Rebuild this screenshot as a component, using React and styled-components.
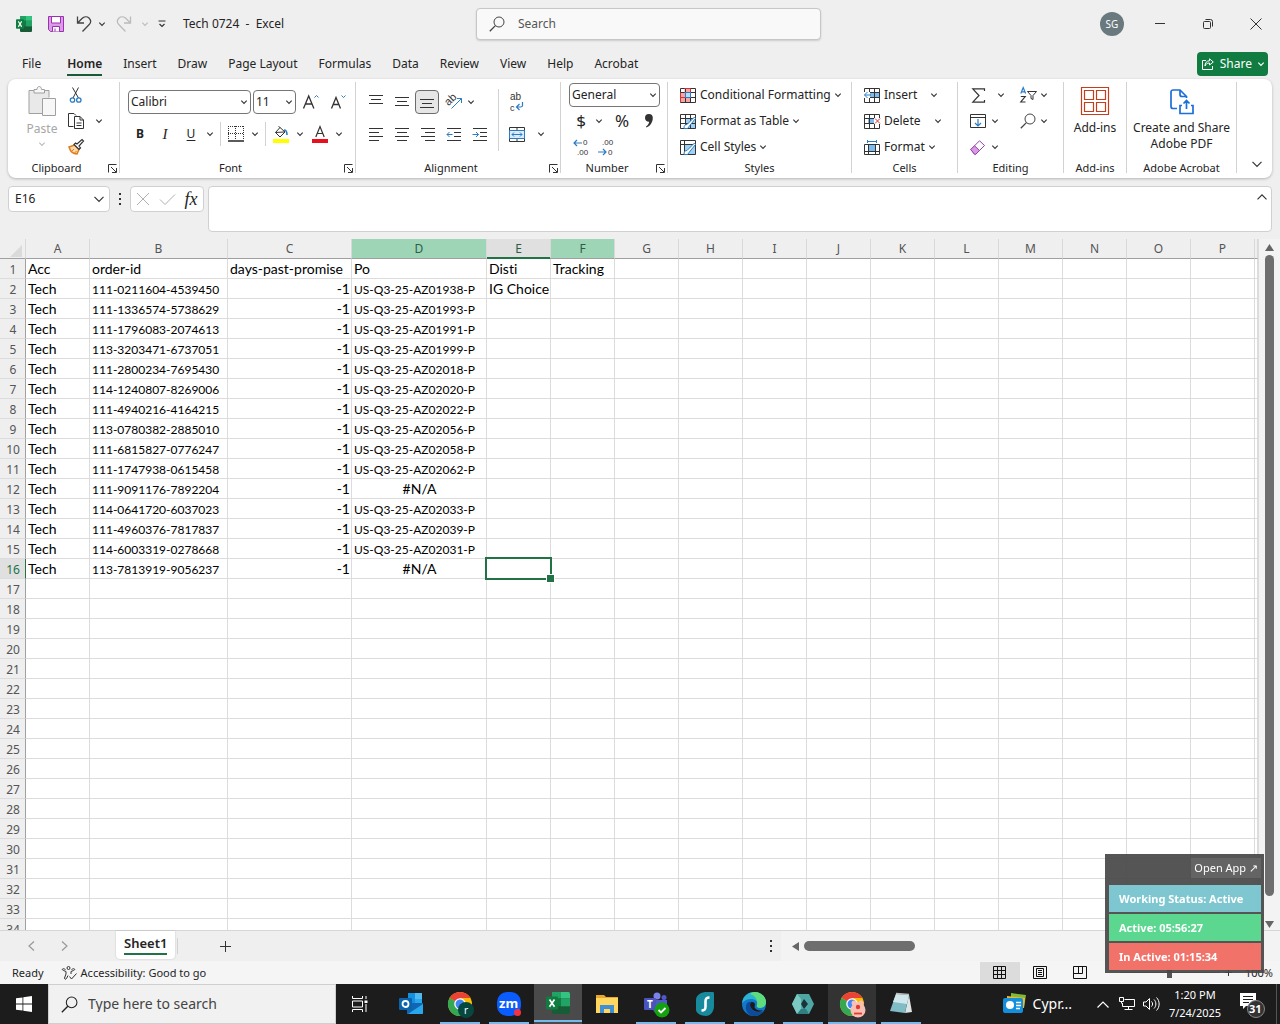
import React from 'react';
import styled, { createGlobalStyle, css } from 'styled-components';

const GlobalStyle = createGlobalStyle`
    * { box-sizing: border-box; }
    body {
        margin: 0;
        background: #efefef;
        color: #242424;
        font-family: 'Noto Sans', 'Open Sans', sans-serif;
        font-size: 12px;
        line-height: 16px;
    }
    button, input, select, textarea {
        font: inherit;
        color: inherit;
        margin: 0;
        padding: 0;
        border: 0;
        background: none;
        outline: none;
    }
    button { cursor: pointer; }
`;

const Page = styled.div`
    display: flex;
    flex-direction: column;
    height: 100vh;
    overflow: hidden;
`;

const Svg = styled.svg`
    display: block;
    flex: none;
    fill: ${props => props.$fill || 'none'};
    stroke: ${props => props.$stroke || '#333'};
    stroke-width: 1;
    overflow: visible;
`;

const IconButton = styled.button`
    display: flex;
    align-items: center;
    justify-content: center;
    flex: none;
    width: ${props => props.$w || 26}px;
    height: ${props => props.$h || 26}px;
    ${props => props.$pressed && css`
        background: #e6e6e6;
        border: 1px solid #6b6b6b;
        border-radius: 4px;
    `}
`;

/* ---------- title bar ---------- */

const TitleBar = styled.header`
    display: grid;
    grid-template-columns: 476fr 345fr 459fr;
    align-items: center;
    height: 48px;
    flex: none;
`;

const QuickAccess = styled.div`
    display: flex;
    align-items: center;
    padding-left: 8px;
`;

const DocTitle = styled.h1`
    margin: 0 0 0 9px;
    font-size: 12px;
    font-weight: 400;
    line-height: 18px;
    white-space: pre;
`;

const SearchBox = styled.label`
    display: flex;
    align-items: center;
    gap: 13px;
    height: 32px;
    padding: 0 12px;
    background: #f9f9f9;
    border: 1px solid #c6c6c6;
    border-radius: 4px;
    box-shadow: 0 1px 2px rgba(0, 0, 0, 0.15);
    input { flex: 1; min-width: 0; line-height: 18px; }
    input::placeholder { color: #555; opacity: 1; }
`;

const WindowControls = styled.div`
    display: flex;
    align-items: center;
    justify-content: flex-end;
`;

const Avatar = styled.button`
    width: 24px;
    height: 24px;
    margin-right: 12px;
    border-radius: 50%;
    background: #69797e;
    color: #fff;
    font-size: 10px;
`;

/* ---------- ribbon tabs ---------- */

const TabBar = styled.nav`
    display: flex;
    align-items: center;
    height: 31px;
    flex: none;
    padding: 0 12px;
`;

const Tab = styled.button`
    height: 24px;
    padding: 0 11px 0 10px;
    white-space: nowrap;
    font-weight: ${props => (props.$active ? 600 : 400)};
    &:first-child { margin-right: 5px; }
    span {
        display: block;
        height: 24px;
        line-height: 24px;
        border-bottom: 2px solid ${props => (props.$active ? '#185c37' : 'transparent')};
    }
`;

const ShareButton = styled.button`
    display: flex;
    align-items: center;
    gap: 6px;
    height: 24px;
    margin-left: auto;
    padding: 0 4px 0 5px;
    border-radius: 4px;
    background: #107c41;
    color: #fff;
`;

/* ---------- ribbon ---------- */

const Ribbon = styled.section`
    display: flex;
    flex: none;
    height: 99px;
    margin: 0 8px;
    background: #fff;
    border-radius: 8px;
    box-shadow: 0 1px 3px rgba(0, 0, 0, 0.25);
`;

const Group = styled.div`
    display: flex;
    flex-direction: column;
    flex: none;
    width: ${props => props.$w}px;
    height: 91px;
    margin-top: 3px;
    border-right: 1px solid #d2d2d2;
`;

const GroupBody = styled.div`
    display: flex;
    flex-direction: column;
    flex: 1;
    gap: ${props => props.$gap || 0}px;
    padding: ${props => props.$pad || '0'};
`;

const GroupLabel = styled.div`
    display: grid;
    grid-template-columns: ${props => (props.$launcher ? '1fr 14px' : '1fr')};
    align-items: center;
    justify-items: center;
    height: 14px;
    margin-bottom: -2px;
    font-size: 11px;
    line-height: 14px;
    white-space: nowrap;
`;

const Row = styled.div`
    display: flex;
    align-items: center;
    height: 26px;
    gap: ${props => props.$gap || 0}px;
`;

const Stack = styled.div`
    display: flex;
    flex-direction: column;
    gap: ${props => props.$gap || 0}px;
`;

const Columns = styled.div`
    display: flex;
    gap: ${props => props.$gap || 0}px;
`;

const Divider = styled.div`
    width: 1px;
    height: ${props => props.$h || 24}px;
    margin: ${props => props.$m || '0 2px 0 4px'};
    background: ${props => props.$color || '#d2d2d2'};
`;

const SelectBox = styled.span`
    display: grid;
    align-items: center;
    width: ${props => props.$w}px;
    height: 24px;
    border: 1px solid #767676;
    border-radius: 4px;
    background: #fff;
    select, svg { grid-area: 1 / 1; }
    select {
        appearance: none;
        width: 100%;
        padding-left: 2px;
        line-height: 20px;
    }
    svg { justify-self: end; margin-right: 3px; pointer-events: none; }
`;

const PasteButton = styled.button`
    display: flex;
    flex-direction: column;
    align-items: center;
    gap: 4px;
    width: 42px;
    margin-top: 4px;
    color: #a6a6a6;
`;

const CommandButton = styled.button`
    display: flex;
    align-items: center;
    gap: 4px;
    height: 26px;
    white-space: nowrap;
    text-align: left;
    span { width: ${props => (props.$w ? props.$w + 'px' : 'auto')}; }
`;

const LargeButton = styled.button`
    display: flex;
    flex-direction: column;
    align-items: center;
    gap: 5px;
    padding-top: ${props => props.$top}px;
    white-space: nowrap;
`;

const Glyph = styled.span`
    font-size: ${props => props.$size || 13}px;
    font-weight: ${props => (props.$bold ? 700 : 400)};
    font-family: ${props => (props.$serif ? "'Liberation Serif', serif" : 'inherit')};
    font-style: ${props => (props.$italic ? 'italic' : 'normal')};
    text-decoration: ${props => (props.$underline ? 'underline' : 'none')};
    text-underline-offset: 2px;
`;

const RibbonEnd = styled.div`
    display: flex;
    flex: 1;
    align-items: flex-end;
    justify-content: flex-end;
    padding: 0 2px 1px 0;
`;

/* ---------- formula bar ---------- */

const FormulaBar = styled.div`
    display: flex;
    align-items: flex-start;
    flex: none;
    padding: 8px 8px 7px;
`;

const FieldBox = styled.div`
    display: flex;
    align-items: center;
    width: ${props => props.$w}px;
    height: 26px;
    background: #fff;
    border: 1px solid #d0d0d0;
    border-radius: 4px;
    input { flex: 1; min-width: 0; padding-left: 6px; line-height: 18px; }
`;

const FormulaField = styled.div`
    display: flex;
    flex: 1;
    height: 46px;
    margin-left: 4px;
    background: #fff;
    border: 1px solid #d0d0d0;
    border-radius: 4px;
    textarea { flex: 1; resize: none; padding: 4px 6px; }
`;

/* ---------- worksheet ---------- */

const SheetArea = styled.main`
    display: flex;
    flex: 1;
    min-height: 0;
    overflow: hidden;
`;

const GridView = styled.div`
    flex: 1;
    min-width: 0;
    overflow: hidden;
`;

const Grid = styled.table`
    width: 100%;
    table-layout: fixed;
    border-collapse: separate;
    border-spacing: 0;
    background: #fff;
`;

const ColHead = styled.th`
    height: 20px;
    padding: 0;
    font-weight: 400;
    color: ${props => (props.$state ? '#2b5f45' : '#555')};
    background: ${props => ({ marked: '#9fd5b7', active: '#e0e0e0' }[props.$state] || '#efefef')};
    border-right: 1px solid #d9d9d9;
    border-bottom: 1px solid ${props => (props.$state === 'active' ? '#217346' : '#a0a0a0')};
    box-shadow: ${props => (props.$state === 'active' ? 'inset 0 -1px #217346' : 'none')};
    svg { margin: 4px 0 0 10px; }
`;

const RowHead = styled.th`
    height: 20px;
    padding: 2px 0 0 1px;
    font-weight: 400;
    line-height: 17px;
    color: ${props => (props.$active ? '#217346' : '#555')};
    background: ${props => (props.$active ? '#e0e0e0' : '#efefef')};
    border-right: 1px solid ${props => (props.$active ? '#217346' : '#a0a0a0')};
    border-bottom: 1px solid #dcdcdc;
`;

const Cell = styled.td`
    position: relative;
    height: 20px;
    padding: ${props => (props.$long ? 2 : 1)}px 1px 0 2px;
    font-family: Lato, sans-serif;
    font-size: ${props => (props.$long ? 12 : 14)}px;
    font-variant-ligatures: none;
    line-height: 17px;
    color: #000;
    white-space: nowrap;
    text-align: ${props => props.$align || 'left'};
    vertical-align: top;
    border-right: 1px solid #dcdcdc;
    border-bottom: 1px solid #dcdcdc;
`;

const Selection = styled.div`
    position: absolute;
    inset: -2px;
    border: 2px solid #217346;
    z-index: 1;
    &::after {
        content: '';
        position: absolute;
        right: -5px;
        bottom: -5px;
        width: 7px;
        height: 7px;
        background: #217346;
        border: 1px solid #fff;
    }
`;

const VScroll = styled.div`
    display: flex;
    flex-direction: column;
    align-items: center;
    width: 22px;
    padding: 4px 0 1px;
    background: #f3f3f3;
    border-left: 1px solid #dcdcdc;
`;

const Thumb = styled.div`
    background: #6e6e6e;
    border-radius: 5px;
    ${props => (props.$vertical
        ? css`width: 9px; flex: 640 1 0;`
        : css`height: 10px; flex: 111 1 0;`)}
`;

const Space = styled.div`
    flex: ${props => props.$grow || 1} 1 0;
`;

const SheetTabs = styled.div`
    display: flex;
    align-items: center;
    height: 31px;
    flex: none;
    border-top: 1px solid #d6d6d6;
`;

const SheetNav = styled.div`
    display: flex;
    width: 116px;
    padding-left: 15px;
`;

const SheetTab = styled.button`
    display: flex;
    align-self: flex-start;
    align-items: flex-start;
    height: 28px;
    padding: 0 8px;
    background: #fff;
    border-radius: 0 0 4px 4px;
    box-shadow: 0 0 2px rgba(0, 0, 0, 0.2);
    font-size: 13px;
    font-weight: 600;
    span {
        height: 24px;
        line-height: 24px;
        border-bottom: 2px solid #217346;
    }
`;

const HScroll = styled.div`
    display: flex;
    align-items: center;
    width: 39%;
    height: 30px;
    gap: 4px;
    padding: 0 23px 0 10px;
    background: #f3f3f3;
`;

const StatusBar = styled.footer`
    display: flex;
    align-items: center;
    height: 23px;
    flex: none;
    padding: 0 7px 0 12px;
    background: #f5f5f5;
    font-size: 11px;
`;

const StatusButton = styled.button`
    display: flex;
    align-items: center;
    gap: 4px;
    margin-left: ${props => props.$left}px;
`;

const ViewButton = styled.button`
    display: flex;
    align-items: center;
    justify-content: center;
    width: 40px;
    height: 22px;
    background: ${props => (props.$active ? '#dcdcdc' : 'none')};
`;

const ZoomTrack = styled.div`
    display: flex;
    justify-content: center;
    align-items: center;
    width: 100px;
    height: 1px;
    margin: 0 4px 0 20px;
    background: #777;
    i { width: 5px; height: 11px; background: #555; }
`;

/* ---------- tracker widget ---------- */

const Tracker = styled.aside`
    position: fixed;
    right: 16px;
    bottom: 51px;
    z-index: 2;
    display: flex;
    flex-direction: column;
    gap: 2px;
    width: 159px;
    padding: 4px 3px 3px 4px;
    background: rgba(70, 70, 70, 0.92);
`;

const OpenApp = styled.button`
    align-self: flex-end;
    height: 20px;
    margin-bottom: 5px;
    padding: 0 3px;
    background: #646464;
    color: #fff;
    font-size: 11px;
    white-space: nowrap;
`;

const TrackerLine = styled.div`
    height: 27px;
    padding-left: 10px;
    background: ${props => props.$color};
    color: #fff;
    font-size: 11px;
    font-weight: 700;
    line-height: 27px;
    white-space: nowrap;
`;

/* ---------- taskbar ---------- */

const Taskbar = styled.footer`
    display: flex;
    height: 40px;
    flex: none;
    background: #1c1c1c;
    color: #fff;
`;

const TaskSearch = styled.label`
    display: flex;
    align-items: center;
    gap: 10px;
    width: 288px;
    padding: 0 12px;
    background: #f1f1f1;
    border: 1px solid #cfcfcf;
    color: #333;
    font-size: 14px;
    input { flex: 1; min-width: 0; }
    input::placeholder { color: #444; opacity: 1; }
`;

const Apps = styled.div`
    display: flex;
    gap: 1px;
    margin-left: 3px;
`;

const AppButton = styled.button`
    display: flex;
    flex-direction: column;
    align-items: center;
    width: 48px;
    height: 40px;
    padding-top: 8px;
    background: ${props => props.$bg || 'none'};
    &::after {
        content: '';
        width: ${props => (props.$bg ? 48 : 40)}px;
        height: 2px;
        margin-top: 6px;
        background: ${props => (props.$running ? '#76b9ed' : 'transparent')};
    }
`;

const Tray = styled.div`
    display: flex;
    align-items: center;
    margin-left: auto;
    padding-right: 3px;
`;

const Weather = styled.button`
    display: flex;
    align-items: center;
    gap: 7px;
    margin-right: 19px;
    font-size: 14px;
`;

const Clock = styled.time`
    width: 64px;
    text-align: center;
    font-size: 11px;
    line-height: 18px;
`;

/* ---------- icons ---------- */

const BLUE = '#2b7cc4';

const IconText = styled.text`
    fill: #333;
    stroke: none;
    font-family: 'Liberation Sans', sans-serif;
    font-size: ${props => props.$size}px;
`;

const Chevron = ({ size = 6, color, up }) => (
    <Svg width={size} height={size} viewBox="0 0 6 6" $stroke={color}>
        <path d={up ? 'M0.3 4.4 3 1.7 5.7 4.4' : 'M0.3 1.7 3 4.4 5.7 1.7'} strokeWidth={size > 8 ? 0.7 : 1.1} />
    </Svg>
);

const DropButton = ({ w = 12, color, label }) => (
    <IconButton $w={w} aria-label={label}><Chevron color={color} /></IconButton>
);

const Magnifier = ({ size = 16, color = '#444' }) => (
    <Svg width={size} height={size} viewBox="0 0 16 16" $stroke={color}>
        <circle cx="10" cy="6" r="5" />
        <path d="M6.4 9.6 0.8 15.2" strokeWidth="1.3" />
    </Svg>
);

const ExcelLogo = ({ w = 16, h = 16 }) => (
    <Svg width={w} height={h} viewBox="0 0 24 20" preserveAspectRatio="none" $stroke="none">
        <rect x="6" y="0" width="18" height="20" rx="1.5" fill="#185c37" />
        <path d="M6 0h9v6H6z" fill="#21a366" />
        <path d="M15 0h7.5A1.5 1.5 0 0 1 24 1.5V6h-9z" fill="#33c481" />
        <path d="M6 6h9v7H6z" fill="#107c41" />
        <path d="M15 6h9v7h-9z" fill="#21a366" />
        <rect x="0" y="4" width="12" height="12" rx="1.2" fill="#107c41" />
        <path d="M3.5 6.8 8.5 13.4M8.5 6.8 3.5 13.4" stroke="#fff" strokeWidth="1.7" />
    </Svg>
);

const SaveIcon = () => (
    <Svg width="16" height="16" viewBox="0 0 16 16" $stroke="#9b30b0">
        <path d="M0.5 0.5h15v15h-13l-2-2z" fill="#dc9be6" />
        <path d="M3.5 0.5h9v6.5h-9z" fill="#fff" />
        <path d="M4.5 15.5v-5h7v5" fill="#fff" />
        <path d="M7 12.5v3" />
    </Svg>
);

const UndoIcon = ({ flip, color }) => (
    <Svg width="16" height="16" viewBox="0 0 16 16" $stroke={color}>
        <g transform={flip ? 'matrix(-1 0 0 1 16 0)' : undefined}>
            <path d="M1.5 0.5v6.5h6.5M1.8 6.7 6 2.5C8 0.5 11 0.3 13 2c2 2 2 4.8 0 6.8L6.5 15.5" strokeWidth="1.3" />
        </g>
    </Svg>
);

const Launcher = () => (
    <Svg width="9" height="9" viewBox="0 0 9 9">
        <path d="M0.5 8.5v-8h8M3 3l5 5M8.5 4v4.5H4" />
    </Svg>
);

const PasteIcon = () => (
    <Svg width="28" height="31" viewBox="0 0 28 31" $stroke="#a0a0a0">
        <path d="M1 4.5h20v23H1z" fill="#e9e9e9" stroke="none" />
        <path d="M14 27.5H1v-23h5M16 4.5h5v7" />
        <path d="M6 7V3.5h3c0-4 4.5-4 4.5 0h3V7z" fill="#f7f7f7" />
        <path d="M14.5 12.5h13v17h-13z" fill="#f7f7f7" />
    </Svg>
);

const ScissorsIcon = () => (
    <Svg width="14" height="16" viewBox="0 0 14 16">
        <path d="M3.5 0.5 9.5 11M9.5 0.5 4 11" />
        <circle cx="3.5" cy="13" r="2.2" stroke={BLUE} strokeWidth="1.3" />
        <circle cx="9.8" cy="13" r="2.2" stroke={BLUE} strokeWidth="1.3" />
    </Svg>
);

const CopyIcon = () => (
    <Svg width="16" height="16" viewBox="0 0 16 16">
        <path d="M5.5 13.5H0.5v-13h5.5l2 2" />
        <path d="M6.5 3.5h5.5l3.5 3.5v8.5h-9zM12 3.5V7h3.5M8.5 10h5M8.5 12.5h5" fill="#fff" />
    </Svg>
);

const BrushIcon = () => (
    <Svg width="16" height="16" viewBox="0 0 16 16">
        <path d="M1 8 6.5 6l4.5 4.5L9 15c-3 0-6.5-2-8-7z" fill="#fbd9a8" stroke="#e07b1a" strokeWidth="1.5" />
        <path d="M4 12l2-2M6.5 14l2-2" stroke="#e07b1a" />
        <path d="M6 5.5 11 10.5l1.5-1.5-1.5-2 4.5-5-1.5-1.5L9 5 7.5 4z" fill="#fff" strokeWidth="1.2" />
    </Svg>
);

const GrowFont = ({ down }) => (
    <Svg width="16" height="16" viewBox="0 0 16 16">
        <path d={down ? 'M1.5 14.5 6 3.5l4.5 11M3.2 10.5h5.6' : 'M0.5 14.5 5.7 2l5.2 12.5M2.4 10h6.6'} strokeWidth="1.3" />
        <path d={down ? 'M11.5 1.5l2 2 2-2' : 'M11.5 3.5l2-2 2 2'} stroke={BLUE} />
    </Svg>
);

const BorderIcon = () => (
    <Svg width="16" height="16" viewBox="0 0 16 16">
        <path d="M0.5 0v14M15.5 0v14M7.5 0v14M0 0.5h16M0 7.5h16" strokeDasharray="1 1" />
        <path d="M0 15h16" strokeWidth="1.6" />
    </Svg>
);

const FillIcon = () => (
    <Svg width="16" height="17" viewBox="0 0 16 17">
        <path d="M7 1.5 12 6 7 11 2.5 6.5 7 1.5 5.5 0.5M2.5 6.5 11 6" />
        <path d="M11 4c2 0 3 1.5 3 5" stroke={BLUE} strokeWidth="1.6" />
        <path d="M0 13h16v4H0z" fill="#ffff00" stroke="none" />
    </Svg>
);

const FontColorIcon = () => (
    <Svg width="16" height="17" viewBox="0 0 16 17">
        <path d="M3.8 11 8 0.5 12.2 11M5.2 7.5h5.6" strokeWidth="1.2" />
        <path d="M0 13h16v4H0z" fill="#e8101e" stroke="none" />
    </Svg>
);

// lines: [x1, x2] pairs, 4px apart
const LinesIcon = ({ lines, top = 2, children }) => (
    <Svg width="16" height="16" viewBox="0 0 16 16">
        {lines.map(([a, b], i) => <path key={i} d={`M${a} ${top + i * 4 + 0.5}H${b}`} />)}
        {children}
    </Svg>
);

const OrientationIcon = () => (
    <Svg width="17" height="16" viewBox="0 0 17 16">
        <IconText $size={11} x="0" y="10" transform="rotate(-45 4 8)">ab</IconText>
        <path d="M5.5 14.5 15.5 4.5M11 4.5h4.5V9" stroke={BLUE} />
    </Svg>
);

const WrapIcon = () => (
    <Svg width="14" height="17" viewBox="0 0 14 17">
        <IconText $size={10} x="0" y="6">ab</IconText>
        <IconText $size={9} x="0" y="17">c</IconText>
        <path d="M12.5 8v3.5c0 1-1 1.5-2 1.5H7M9.5 10 6.5 13l3 3" stroke={BLUE} strokeWidth="1.2" />
    </Svg>
);

const MergeIcon = () => (
    <Svg width="16" height="15" viewBox="0 0 16 15">
        <path d="M0.5 0.5h15v14H0.5zM8 0.5v3M8 11.5v3" />
        <path d="M0.5 3.5h15v8H0.5z" fill="#d9ecfb" stroke={BLUE} />
        <path d="M3 7.5h10M5 5.5l-2 2 2 2M11 5.5l2 2-2 2" stroke={BLUE} />
    </Svg>
);

const DecimalIcon = ({ less }) => (
    <Svg width="16" height="16" viewBox="0 0 16 16">
        <IconText $size={8} x={less ? 4 : 10} y="6">{less ? '.00' : '0'}</IconText>
        <IconText $size={8} x={less ? 10 : 4} y="16">{less ? '0' : '.00'}</IconText>
        <path d={less ? 'M0 13h8M5 10l3 3-3 3' : 'M9 4H1M4 1 1 4l3 3'} stroke={BLUE} strokeWidth="1.2" />
    </Svg>
);

const PenOverlay = () => (
    <path d="M4 14.5c0-3 1-4 3-4L14.5 3l1 1.5-6.5 8c0 1.5-2 2.5-5 2z" fill="#fff" stroke={BLUE} />
);

const tableGrid = 'M0.5 0.5h15v14h-15zM0.5 4.5h15M0.5 9.5h15M5.5 0.5v14M10.5 0.5v14';

const tableIcons = {
    conditional: (
        <>
            <path d="M4.5 0.5h6v4h-6zM0.5 4.5h5v10h-5zM5.5 9.5h5v5h-5z" fill="#f6a5a5" stroke="none" />
            <path d={tableGrid} />
            <path d="M4.5 0.5h6M4.5 4.5h6M0.5 9.5h10M0.5 4.5v10M10.5 0.5v4" stroke="#d13438" />
            <path d="M5.5 4.5h5v5h-5z" fill="#b9dcf7" stroke={BLUE} />
        </>
    ),
    table: (
        <>
            <path d="M5 5h10.5v9.5H5z" fill="#9fd0f5" stroke="none" />
            <path d={tableGrid} />
            <PenOverlay />
        </>
    ),
    styles: (
        <>
            <path d="M4 4h11.5v10.5H4z" fill="#9fd0f5" stroke="none" />
            <path d="M0.5 0.5h15v14h-15zM0.5 4.5h15M4.5 0.5v14" />
            <PenOverlay />
        </>
    ),
    insert: (
        <>
            <path d="M6 4.5h9.5v5H6z" fill="#7cbcf0" stroke="none" />
            <path d={tableGrid} />
            <path d="M0 4h6v6H0z" fill="#fff" stroke="none" />
            <path d="M7 7H0.5M3.5 4l-3 3 3 3" stroke={BLUE} />
        </>
    ),
    delete: (
        <>
            <path d="M4 4.5h6v5H4z" fill="#7cbcf0" stroke="none" />
            <path d={tableGrid} />
            <path d="M10 4h6v6h-6z" fill="#fff" stroke="none" />
            <path d="M11 4.5l5 5M16 4.5 11 9.5" stroke="#d13438" />
        </>
    ),
    format: (
        <>
            <path d="M4.5 5h7v6h-7z" fill="#7cbcf0" stroke="none" />
            <path d="M0.5 4.5h15v10h-15zM0.5 11.5h15M4.5 4.5v10M11.5 4.5v10" />
            <path d="M3.5 1.5h9M3.5 0v3M12.5 0v3" stroke={BLUE} />
        </>
    )
};

const SigmaIcon = () => (
    <Svg width="13" height="15" viewBox="0 0 13 15">
        <path d="M12.5 3V0.8H0.8L7 7.5 0.8 14.2h11.7V12" strokeWidth="1.2" />
    </Svg>
);

const FillDownIcon = () => (
    <Svg width="16" height="14" viewBox="0 0 16 14">
        <path d="M0.5 0.5h15v13h-15zM0.5 3.5h15" />
        <path d="M8 5v7M5 9l3 3 3-3" stroke={BLUE} strokeWidth="1.2" />
    </Svg>
);

const EraserIcon = () => (
    <Svg width="16" height="15" viewBox="0 0 16 15" $stroke="#9b3fb0">
        <path d="M0.8 9.5 9.5 0.8l5 4.7-8.7 8.7H4.5z" fill="#fff" />
        <path d="M0.8 9.5 4.5 5.8l5 4.7-3.7 3.7H4.5z" fill="#d79be3" />
    </Svg>
);

const SortIcon = () => (
    <Svg width="17" height="16" viewBox="0 0 17 16">
        <path d="M0.8 6.5 3.2 0.5l2.4 6M1.5 4.8h3.4" stroke={BLUE} strokeWidth="1.2" />
        <path d="M0.8 9.5h4.4L0.8 15h4.7" strokeWidth="1.2" />
        <path d="M7.5 4.5h9l-3.5 4v4l-2-1v-3z" />
    </Svg>
);

const AddInsIcon = () => (
    <Svg width="28" height="28" viewBox="0 0 28 28" $stroke="#c43e1c">
        <path d="M0.5 0.5h27v27h-27zM3.5 3.5h9v9h-9zM15.5 3.5h9v9h-9zM3.5 15.5h9v9h-9zM15.5 15.5h9v9h-9z" strokeWidth="1.2" />
    </Svg>
);

const PdfShareIcon = () => (
    <Svg width="24" height="26" viewBox="0 0 24 26" $stroke="#1b6fd8">
        <path d="M7 19.5H3a2 2 0 0 1-2-2V3a2 2 0 0 1 2-2h7l6.5 6.5V9M10 1v4.5a2 2 0 0 0 2 2h4.5" strokeWidth="1.7" />
        <path d="M12 16.5h-2v8h13v-8h-2M16.5 20v-8M13.5 14.5l3-3 3 3" strokeWidth="1.7" />
    </Svg>
);

const ShareIcon = () => (
    <Svg width="12" height="12" viewBox="0 0 12 12" $stroke="#fff">
        <path d="M4 2.5H0.5v9h10V8M7.5 0.8 11.3 4 7.5 7V5C5 5 3.8 6 3 8c0-3 1.5-5.2 4.5-5.2z" />
    </Svg>
);

const Arrow = ({ dir }) => (
    <Svg width="9" height="9" viewBox="0 0 9 9" $stroke="none" $fill="#666">
        <path d={{ up: 'M0 8 4.5 1 9 8z', down: 'M0 1h9L4.5 8z', left: 'M8 0v9L1 4.5z', right: 'M1 0v9l7-4.5z' }[dir]} />
    </Svg>
);

const Dots = () => (
    <Svg width="2" height="12" $stroke="none" $fill="#333">
        <path d="M0 0h2v2H0zM0 5h2v2H0zM0 10h2v2H0z" />
    </Svg>
);

const AppSvg = ({ children }) => (
    <Svg width="24" height="24" viewBox="0 0 24 24" $stroke="none">{children}</Svg>
);

const ChromeBase = () => (
    <g>
        <circle cx="12" cy="12" r="12" fill="#fbbc04" />
        <path d="M12 12 1.6 6A12 12 0 0 1 22.4 6H12z" fill="#ea4335" />
        <path d="M1.6 6A12 12 0 0 0 12 24l5-9-5-3z" fill="#34a853" />
        <circle cx="12" cy="12" r="5.8" fill="#fff" />
        <circle cx="12" cy="12" r="4.5" fill="#4285f4" />
    </g>
);

const appIcons = {
    Outlook: (
        <AppSvg>
            <path d="M9 1h14v11H9z" fill="#1490df" />
            <path d="M16 1h7v6h-7z" fill="#50b9f0" />
            <path d="M16 7h7v6h-7z" fill="#28a8ea" />
            <path d="M8 11h16v10a1 1 0 0 1-1 1H8z" fill="#1066b5" />
            <path d="M24 12v9a1 1 0 0 1-1 1H9z" fill="#28a8ea" />
            <rect x="0" y="6" width="13" height="12" rx="1" fill="#0a64ad" />
            <circle cx="6.5" cy="12" r="3" stroke="#fff" strokeWidth="1.8" />
        </AppSvg>
    ),
    Chrome: (
        <AppSvg>
            <ChromeBase />
            <circle cx="18" cy="18" r="8" fill="#06483f" />
            <text x="16" y="22" fontSize="10" fill="#fff">r</text>
        </AppSvg>
    ),
    Zoom: (
        <AppSvg>
            <rect width="24" height="24" rx="10" fill="#0b5cff" />
            <text x="2" y="16" fontSize="13" fontWeight="700" fill="#fff">zm</text>
            <circle cx="20.5" cy="20.5" r="3.5" fill="#f5333f" />
        </AppSvg>
    ),
    Excel: <ExcelLogo w={24} h={22} />,
    'File Explorer': (
        <AppSvg>
            <path d="M1 3h8l2 2h12v16H1z" fill="#e8a72c" />
            <path d="M1 6h22v15H1z" fill="#ffd75e" />
            <path d="M5 21v-8h14v8h-4v-4H9v4z" fill="#3f8fd8" />
        </AppSvg>
    ),
    Teams: (
        <AppSvg>
            <circle cx="13" cy="4" r="3.5" fill="#7b83eb" />
            <circle cx="20" cy="5.5" r="2.5" fill="#5059c9" />
            <path d="M8 8h15v7c0 4-4 7-8 7s-6-3-6-6z" fill="#5059c9" />
            <rect x="0" y="6" width="12" height="12" rx="1" fill="#4b53bc" />
            <text x="3" y="16" fontSize="10" fontWeight="700" fill="#fff">T</text>
            <circle cx="18" cy="18" r="7.5" fill="#13a10e" />
            <path d="m14.5 18 2.5 2.5 4.5-4.5" stroke="#fff" strokeWidth="1.8" />
        </AppSvg>
    ),
    Surfshark: (
        <AppSvg>
            <path d="M3 8c0-4 3-7 9-8h8c1 0 1 1 1 3v11c0 6-4 10-8 10-5 0-10-3-10-6z" fill="#178a9e" />
            <path d="M16.5 5.5c-3 0-4 1-4 4v5c0 3-1 4-4 4" stroke="#fff" strokeWidth="2.6" />
        </AppSvg>
    ),
    Edge: (
        <AppSvg>
            <circle cx="12" cy="12" r="12" fill="#1478c8" />
            <path d="M0 11C1 4 6 0 12 0c7 0 12 5 12 10 0 4-3 6-6 6-2 0-4-1-3-3 1-4-2-6-6-6-4 0-7 2-9 4z" fill="#2bb3d2" />
            <path d="M13 0c6 0 11 5 11 10 0 4-3 6-6 6-2 0-4-1-3-3 1-5-1-9-7-11 2-1.5 3-2 5-2z" fill="#5fdc7c" />
            <path d="M8 12c0 6 5 10 13 7-2 4-5 5-9 5-6 0-9-6-8-10 0-3 3-5 6-4-2 0-2 1-2 2z" fill="#0c4a9b" />
            <path d="M10 10c2 0 3 1 3 3 0 1-1 2 0 3 1 2 5 3 8 2-5 4-12 1-13-5 0-2 1-3 2-3z" fill="#1c1c1c" />
        </AppSvg>
    ),
    Hexnode: (
        <AppSvg>
            <path d="M6 2h12l5 10-5 10H6L1 12z" fill="#4fa7a5" />
            <path d="M6 2 1 12l5 10 4-5V7z" fill="#7cc9c4" />
            <path d="M18 22H6l4-5h5z" fill="#2f7f82" />
            <path d="m13 7 4 5-4 5-3-5z" fill="#1b3338" />
        </AppSvg>
    ),
    'Chrome work profile': (
        <AppSvg>
            <ChromeBase />
            <circle cx="18" cy="18" r="7.5" fill="#f8c0b4" />
            <circle cx="14" cy="11" r="2.5" fill="#f8c0b4" />
            <circle cx="21" cy="11" r="2.5" fill="#f8c0b4" />
            <circle cx="18" cy="15" r="2.2" fill="#e23b2e" />
            <path d="M14 21.5h8" stroke="#e23b2e" strokeWidth="1.8" />
        </AppSvg>
    ),
    Notepad: (
        <AppSvg>
            <path d="m20 3 3 17-7 1z" fill="#dfe4e4" />
            <path d="M7 2 20 3l-4 18L1 19z" fill="#7fbcc6" />
            <path d="M7 2 20 3l-2 9-14-2z" fill="#cfe6ea" />
            <path d="M7 1.5 20 2.5" stroke="#bbb" strokeWidth="1.5" />
        </AppSvg>
    )
};

const apps = [
    { name: 'Outlook' },
    { name: 'Chrome', running: true },
    { name: 'Zoom', running: true },
    { name: 'Excel', running: true, bg: '#4a4a4a' },
    { name: 'File Explorer' },
    { name: 'Teams', running: true },
    { name: 'Surfshark', running: true },
    { name: 'Edge', running: true },
    { name: 'Hexnode', running: true },
    { name: 'Chrome work profile', running: true, bg: '#333' },
    { name: 'Notepad', running: true }
];

/* ---------- data ---------- */

const tabs = ['File', 'Home', 'Insert', 'Draw', 'Page Layout', 'Formulas', 'Data', 'Review', 'View', 'Help', 'Acrobat'];

const columns = [
    ['A', 64], ['B', 138], ['C', 124], ['D', 135], ['E', 64], ['F', 64], ['G', 64], ['H', 64],
    ['I', 64], ['J', 64], ['K', 64], ['L', 64], ['M', 64], ['N', 64], ['O', 64], ['P', 64]
];

const headState = { D: 'marked', E: 'active', F: 'marked' };

const orders = [
    ['111-0211604-4539450', 'US-Q3-25-AZ01938-P', 'IG Choice'],
    ['111-1336574-5738629', 'US-Q3-25-AZ01993-P'],
    ['111-1796083-2074613', 'US-Q3-25-AZ01991-P'],
    ['113-3203471-6737051', 'US-Q3-25-AZ01999-P'],
    ['111-2800234-7695430', 'US-Q3-25-AZ02018-P'],
    ['114-1240807-8269006', 'US-Q3-25-AZ02020-P'],
    ['111-4940216-4164215', 'US-Q3-25-AZ02022-P'],
    ['113-0780382-2885010', 'US-Q3-25-AZ02056-P'],
    ['111-6815827-0776247', 'US-Q3-25-AZ02058-P'],
    ['111-1747938-0615458', 'US-Q3-25-AZ02062-P'],
    ['111-9091176-7892204', '#N/A'],
    ['114-0641720-6037023', 'US-Q3-25-AZ02033-P'],
    ['111-4960376-7817837', 'US-Q3-25-AZ02039-P'],
    ['114-6003319-0278668', 'US-Q3-25-AZ02031-P'],
    ['113-7813919-9056237', '#N/A']
];

const rows = [
    ['Acc', 'order-id', 'days-past-promise', 'Po', 'Disti', 'Tracking'],
    ...orders.map(([id, po, disti]) => ['Tech', id, '-1', po, disti || ''])
];

const alignOf = value => {
    if (value === '-1') return 'right';
    if (value === '#N/A') return 'center';
    return 'left';
};

/* ---------- sections ---------- */

const RibbonGroup = ({ w, label, launcher, pad, gap, children }) => (
    <Group $w={w}>
        <GroupBody $pad={pad} $gap={gap}>{children}</GroupBody>
        <GroupLabel $launcher={launcher}>
            <span>{label}</span>
            {launcher && <button aria-label={`${label} settings`}><Launcher /></button>}
        </GroupLabel>
    </Group>
);

const Dropdown = ({ w, label, value }) => (
    <SelectBox $w={w}>
        <select aria-label={label} defaultValue={value}>
            <option>{value}</option>
        </select>
        <Chevron />
    </SelectBox>
);

const Command = ({ kind, w, children }) => (
    <CommandButton $w={w}>
        <Svg width="16" height="15" viewBox="0 0 16 15">{tableIcons[kind]}</Svg>
        <span>{children}</span>
        <Chevron />
    </CommandButton>
);

const TitleSection = () => (
    <TitleBar>
        <QuickAccess>
            <IconButton $w={32} aria-label="Excel"><ExcelLogo /></IconButton>
            <IconButton $w={32} aria-label="Save"><SaveIcon /></IconButton>
            <IconButton $w={24} aria-label="Undo"><UndoIcon color="#444" /></IconButton>
            <DropButton label="Undo history" />
            <IconButton $w={32} aria-label="Redo"><UndoIcon color="#bbb" flip /></IconButton>
            <DropButton label="Redo history" color="#bbb" w={10} />
            <IconButton $w={24} aria-label="Customize toolbar">
                <Svg width="8" height="8" viewBox="0 0 8 8"><path d="M0.5 1h7M1.5 4l2.5 2.5L6.5 4" strokeWidth="1.2" /></Svg>
            </IconButton>
            <DocTitle>Tech 0724  -  Excel</DocTitle>
        </QuickAccess>
        <SearchBox>
            <Magnifier />
            <input type="search" placeholder="Search" aria-label="Search" />
        </SearchBox>
        <WindowControls>
            <Avatar>SG</Avatar>
            <IconButton $w={48} aria-label="Minimize">
                <Svg width="10" height="10"><path d="M0 4.5h10" /></Svg>
            </IconButton>
            <IconButton $w={48} aria-label="Restore">
                <Svg width="10" height="10" viewBox="0 0 10 10">
                    <rect x="0.5" y="2.5" width="7" height="7" rx="1" />
                    <path d="M2.5 0.5h5a2 2 0 0 1 2 2v5" />
                </Svg>
            </IconButton>
            <IconButton $w={48} aria-label="Close">
                <Svg width="12" height="12" viewBox="0 0 12 12"><path d="M0.5 0.5l11 11M11.5 0.5l-11 11" /></Svg>
            </IconButton>
        </WindowControls>
    </TitleBar>
);

const RibbonSection = () => (
    <Ribbon>
        <RibbonGroup w={112} label="Clipboard" launcher pad="0 0 0 13px">
            <Columns>
                <PasteButton>
                    <PasteIcon />
                    <span>Paste</span>
                    <Chevron color="#bbb" />
                </PasteButton>
                <Stack>
                    <Row><IconButton aria-label="Cut"><ScissorsIcon /></IconButton></Row>
                    <Row>
                        <IconButton aria-label="Copy"><CopyIcon /></IconButton>
                        <DropButton label="Copy options" w={20} />
                    </Row>
                    <Row><IconButton aria-label="Format Painter"><BrushIcon /></IconButton></Row>
                </Stack>
            </Columns>
        </RibbonGroup>
        <RibbonGroup w={236} label="Font" launcher pad="7px 0 0 8px" gap={6}>
            <Row $gap={2}>
                <Dropdown w={123} label="Font" value="Calibri" />
                <Dropdown w={43} label="Font size" value="11" />
                <IconButton aria-label="Increase font size"><GrowFont /></IconButton>
                <IconButton $w={24} aria-label="Decrease font size"><GrowFont down /></IconButton>
            </Row>
            <Row>
                <IconButton $w={24} aria-label="Bold"><Glyph $bold $size={12}>B</Glyph></IconButton>
                <IconButton aria-label="Italic"><Glyph $serif $italic $size={15}>I</Glyph></IconButton>
                <IconButton aria-label="Underline"><Glyph $underline $size={12}>U</Glyph></IconButton>
                <DropButton label="Underline style" />
                <Divider />
                <IconButton aria-label="Borders"><BorderIcon /></IconButton>
                <DropButton label="Border style" />
                <Divider />
                <IconButton aria-label="Fill color"><FillIcon /></IconButton>
                <DropButton label="Fill colors" />
                <IconButton $w={28} aria-label="Font color"><FontColorIcon /></IconButton>
                <DropButton label="Font colors" w={10} />
            </Row>
        </RibbonGroup>
        <RibbonGroup w={205} label="Alignment" launcher pad="7px 0 0 7px">
            <Columns>
                <Stack $gap={6}>
                    <Row>
                        <IconButton aria-label="Top align"><LinesIcon top={1} lines={[[1, 15], [3, 13], [1, 15]]} /></IconButton>
                        <IconButton aria-label="Middle align"><LinesIcon top={3} lines={[[1, 15], [3, 13], [1, 15]]} /></IconButton>
                        <IconButton aria-label="Bottom align" $w={24} $h={24} $pressed><LinesIcon top={5} lines={[[1, 15], [3, 13], [1, 15]]} /></IconButton>
                        <IconButton $w={30} aria-label="Orientation"><OrientationIcon /></IconButton>
                        <DropButton label="Orientation options" w={4} />
                    </Row>
                    <Row>
                        <IconButton aria-label="Align left"><LinesIcon lines={[[1, 15], [1, 11], [1, 15], [1, 11]]} /></IconButton>
                        <IconButton aria-label="Center"><LinesIcon lines={[[1, 15], [3, 13], [1, 15], [3, 13]]} /></IconButton>
                        <IconButton aria-label="Align right"><LinesIcon lines={[[1, 15], [5, 15], [1, 15], [5, 15]]} /></IconButton>
                        <IconButton aria-label="Decrease indent">
                            <LinesIcon lines={[[1, 15], [8, 15], [8, 15], [1, 15]]}>
                                <path d="M6.5 8.5H1M3.5 6 1 8.5 3.5 11" stroke={BLUE} />
                            </LinesIcon>
                        </IconButton>
                        <IconButton aria-label="Increase indent">
                            <LinesIcon lines={[[1, 15], [8, 15], [8, 15], [1, 15]]}>
                                <path d="M0.5 8.5h6M4 6l2.5 2.5L4 11" stroke={BLUE} />
                            </LinesIcon>
                        </IconButton>
                    </Row>
                </Stack>
                <Divider $h={62} $m="0 5px 0 5px" />
                <Stack $gap={6}>
                    <Row><IconButton aria-label="Wrap text"><WrapIcon /></IconButton></Row>
                    <Row>
                        <IconButton aria-label="Merge and center"><MergeIcon /></IconButton>
                        <DropButton label="Merge options" w={22} />
                    </Row>
                </Stack>
            </Columns>
        </RibbonGroup>
        <RibbonGroup w={107} label="Number" launcher pad="0 0 0 8px">
            <Row><Dropdown w={91} label="Number format" value="General" /></Row>
            <Row>
                <IconButton $w={24} aria-label="Accounting format"><Glyph $size={17}>$</Glyph></IconButton>
                <DropButton label="Accounting options" />
                <IconButton $w={34} aria-label="Percent style"><Glyph $size={17}>%</Glyph></IconButton>
                <IconButton $w={20} aria-label="Comma style">
                    <Svg width="8" height="14" viewBox="0 0 8 14" $stroke="none" $fill="#333">
                        <path d="M0 4a3.8 3.8 0 0 1 7.8 0c0 4-2.5 8-6.3 9.5L1 12.5C3 11.5 4 9.5 4.2 7.8 2 8 0 6.5 0 4z" />
                    </Svg>
                </IconButton>
            </Row>
            <Row>
                <IconButton $w={24} aria-label="Increase decimal"><DecimalIcon /></IconButton>
                <IconButton aria-label="Decrease decimal"><DecimalIcon less /></IconButton>
            </Row>
        </RibbonGroup>
        <RibbonGroup w={184} label="Styles" pad="0 0 0 12px">
            <Command kind="conditional">Conditional Formatting</Command>
            <Command kind="table">Format as Table</Command>
            <Command kind="styles">Cell Styles</Command>
        </RibbonGroup>
        <RibbonGroup w={106} label="Cells" pad="0 0 0 12px">
            <Command kind="insert" w={43}>Insert</Command>
            <Command kind="delete" w={47}>Delete</Command>
            <Command kind="format">Format</Command>
        </RibbonGroup>
        <RibbonGroup w={106} label="Editing" pad="0 0 0 7px">
            <Columns $gap={7}>
                <Stack>
                    <Row>
                        <IconButton aria-label="AutoSum"><SigmaIcon /></IconButton>
                        <DropButton label="AutoSum options" w={20} />
                    </Row>
                    <Row>
                        <IconButton aria-label="Fill"><FillDownIcon /></IconButton>
                        <DropButton label="Fill options" w={8} />
                    </Row>
                    <Row>
                        <IconButton aria-label="Clear"><EraserIcon /></IconButton>
                        <DropButton label="Clear options" w={8} />
                    </Row>
                </Stack>
                <Stack>
                    <Row>
                        <IconButton $w={20} aria-label="Sort and filter"><SortIcon /></IconButton>
                        <DropButton label="Sort options" />
                    </Row>
                    <Row>
                        <IconButton $w={20} aria-label="Find and select"><Magnifier /></IconButton>
                        <DropButton label="Find options" />
                    </Row>
                </Stack>
            </Columns>
        </RibbonGroup>
        <RibbonGroup w={63} label="Add-ins">
            <LargeButton $top={5}>
                <AddInsIcon />
                <span>Add-ins</span>
            </LargeButton>
        </RibbonGroup>
        <RibbonGroup w={110} label="Adobe Acrobat">
            <LargeButton $top={7}>
                <PdfShareIcon />
                <span>Create and Share<br />Adobe PDF</span>
            </LargeButton>
        </RibbonGroup>
        <RibbonEnd>
            <IconButton aria-label="Collapse ribbon"><Chevron size={10} /></IconButton>
        </RibbonEnd>
    </Ribbon>
);

const FormulaSection = () => (
    <FormulaBar>
        <FieldBox $w={102}>
            <input aria-label="Name box" defaultValue="E16" />
            <IconButton $w={20} $h={24} aria-label="Named ranges"><Chevron size={10} /></IconButton>
        </FieldBox>
        <IconButton $w={20} aria-label="Resize name box"><Dots /></IconButton>
        <FieldBox $w={74}>
            <IconButton $w={24} $h={24} aria-label="Cancel">
                <Svg width="12" height="12" viewBox="0 0 12 12" $stroke="#b0b0b0"><path d="M0 0l12 12M12 0 0 12" /></Svg>
            </IconButton>
            <IconButton $w={24} $h={24} aria-label="Enter">
                <Svg width="15" height="11" viewBox="0 0 15 11" $stroke="#b0b0b0"><path d="M0 5.5l5 5L15 0.5" /></Svg>
            </IconButton>
            <IconButton $w={24} $h={24} aria-label="Insert function"><Glyph $serif $italic $size={18}>fx</Glyph></IconButton>
        </FieldBox>
        <FormulaField>
            <textarea aria-label="Formula" />
            <IconButton $w={18} $h={20} aria-label="Collapse formula bar"><Chevron size={10} up /></IconButton>
        </FormulaField>
    </FormulaBar>
);

const Worksheet = () => (
    <SheetArea>
        <GridView>
            <Grid>
                <colgroup>
                    <col width="26" />
                    {columns.map(([name, width]) => <col key={name} width={width} />)}
                    <col />
                </colgroup>
                <thead>
                    <tr>
                        <ColHead>
                            <Svg width="12" height="12" $stroke="none" $fill="#dadada"><path d="M12 0v12H0z" /></Svg>
                        </ColHead>
                        {columns.map(([name]) => <ColHead key={name} $state={headState[name]}>{name}</ColHead>)}
                        <ColHead />
                    </tr>
                </thead>
                <tbody>
                    {Array.from({ length: 34 }, (_, r) => (
                        <tr key={r}>
                            <RowHead $active={r === 15}>{r + 1}</RowHead>
                            {columns.map(([name], c) => {
                                const value = (rows[r] && rows[r][c]) || '';
                                return (
                                    <Cell key={name} $align={alignOf(value)} $long={value.length > 17}>
                                        {value}
                                        {r === 15 && name === 'E' && <Selection />}
                                    </Cell>
                                );
                            })}
                            <Cell />
                        </tr>
                    ))}
                </tbody>
            </Grid>
        </GridView>
        <VScroll>
            <Arrow dir="up" />
            <Space $grow={3} />
            <Thumb $vertical />
            <Space $grow={24} />
            <Arrow dir="down" />
        </VScroll>
    </SheetArea>
);

const SheetFooter = () => (
    <>
        <SheetTabs>
            <SheetNav>
                <IconButton $w={32} aria-label="Previous sheet">
                    <Svg width="7" height="10" $stroke="#999"><path d="M6 0.5 1 5l5 4.5" strokeWidth="1.2" /></Svg>
                </IconButton>
                <IconButton $w={34} aria-label="Next sheet">
                    <Svg width="7" height="10" $stroke="#999"><path d="M1 0.5 6 5 1 9.5" strokeWidth="1.2" /></Svg>
                </IconButton>
            </SheetNav>
            <SheetTab><span>Sheet1</span></SheetTab>
            <Divider $h={16} $m="0 34px 0 2px" />
            <IconButton aria-label="New sheet">
                <Svg width="11" height="11"><path d="M5.5 0v11M0 5.5h11" /></Svg>
            </IconButton>
            <Space />
            <IconButton $w={20} aria-label="Resize tabs"><Dots /></IconButton>
            <HScroll>
                <Arrow dir="left" />
                <Thumb />
                <Space $grow={325} />
                <Arrow dir="right" />
            </HScroll>
        </SheetTabs>
        <StatusBar>
            <span>Ready</span>
            <StatusButton $left={18}>
                <Svg width="15" height="14" viewBox="0 0 15 14">
                    <circle cx="6.5" cy="2" r="1.5" />
                    <path d="M3.5 3.5C0 1.5-0.5 4 1.5 4.5L4 5.5v2.5l-1.5 4c0 1.5 1.5 1.5 2 0.5l1.5-3M9.5 3.5c3.5-2 4 0.5 2 1L9 5.5V8M7.5 10.5l2 2.5 5-5.5" />
                </Svg>
                Accessibility: Good to go
            </StatusButton>
            <Space />
            <ViewButton $active aria-label="Normal view">
                <Svg width="13" height="13" $stroke="#111"><path d="M0.5 0.5h12v12H0.5zM4.5 0.5v12M8.5 0.5v12M0.5 4.5h12M0.5 8.5h12" /></Svg>
            </ViewButton>
            <ViewButton aria-label="Page layout view">
                <Svg width="14" height="13" $stroke="#111"><path d="M0.5 0.5h13v12H0.5zM3.5 2.5h7v8h-7zM5 4.5h4M5 6.5h4M5 8.5h4" /></Svg>
            </ViewButton>
            <ViewButton aria-label="Page break preview">
                <Svg width="14" height="13" $stroke="#111"><path d="M0.5 0.5h13v12H0.5zM0.5 7.5h9M5.5 0.5v7M9.5 0.5v7" /></Svg>
            </ViewButton>
            <ZoomTrack><i /></ZoomTrack>
            <IconButton $w={10} $h={20} aria-label="Zoom in"><Svg width="7" height="7"><path d="M3.5 0v7M0 3.5h7" /></Svg></IconButton>
            <StatusButton $left={11}>100%</StatusButton>
        </StatusBar>
    </>
);

const TaskbarSection = () => (
    <Taskbar>
        <IconButton $w={48} $h={40} aria-label="Start">
            <Svg width="16" height="16" viewBox="0 0 16 16" $stroke="none" $fill="#fff">
                <path d="M0 2.3 6.5 1.4v6.2H0zM7.3 1.3 16 0v7.6H7.3zM0 8.4h6.5v6.2L0 13.7zM7.3 8.4H16V16l-8.7-1.3z" />
            </Svg>
        </IconButton>
        <TaskSearch>
            <Magnifier size={17} color="#222" />
            <input type="search" placeholder="Type here to search" aria-label="Type here to search" />
        </TaskSearch>
        <IconButton $w={48} $h={40} aria-label="Task view">
            <Svg width="16" height="16" viewBox="0 0 16 16" $stroke="#fff">
                <path d="M0.5 0v2.5h10V0M0.5 5h10v6H0.5zM0.5 16v-2.5h10V16M14 0v3M14 8v8" />
                <path d="M12.5 4.5h3v2.5h-3z" fill="#fff" stroke="none" />
            </Svg>
        </IconButton>
        <Apps>
            {apps.map(app => (
                <AppButton key={app.name} aria-label={app.name} $running={app.running} $bg={app.bg}>
                    {appIcons[app.name]}
                </AppButton>
            ))}
        </Apps>
        <Tray>
            <Weather>
                <Svg width="24" height="24" viewBox="0 0 24 24" $stroke="none">
                    <path d="M9 1l15 2-2 12H9z" fill="#7fba3a" />
                    <path d="M5 4l18 2-1 10H5z" fill="#f2b92e" />
                    <rect x="1" y="6" width="20" height="15" rx="2" fill="#1390dd" />
                    <circle cx="8" cy="13" r="4" fill="#fff" />
                    <path d="M14 10.5h5M14 13.5h5M14 16.5h4" stroke="#fff" strokeWidth="1.3" />
                </Svg>
                Cypr...
            </Weather>
            <IconButton $w={24} aria-label="Hidden icons">
                <Svg width="12" height="7" $stroke="#fff"><path d="M0.5 6.5 6 1l5.5 5.5" strokeWidth="1.2" /></Svg>
            </IconButton>
            <IconButton $w={24} aria-label="Network">
                <Svg width="16" height="14" viewBox="0 0 16 14" $stroke="#fff">
                    <path d="M5.5 2.5h10v7h-12V6M0.5 0.5h4v4h-4zM2.5 4.5v2M9.5 9.5v3M5.5 12.5h8" />
                </Svg>
            </IconButton>
            <IconButton $w={24} aria-label="Volume">
                <Svg width="17" height="14" viewBox="0 0 17 14" $stroke="#fff">
                    <path d="M0.5 5v4H3l3.5 3.5v-11L3 5zM8.5 4.5c1.5 1.5 1.5 3.5 0 5M11 2.5c2.5 2.5 2.5 6.5 0 9M13.5 0.5c3.5 3.5 3.5 9.5 0 13" />
                </Svg>
            </IconButton>
            <Clock>1:20 PM<br />7/24/2025</Clock>
            <IconButton $w={49} $h={40} aria-label="31 notifications">
                <Svg width="24" height="24" viewBox="0 0 24 24" $stroke="none">
                    <path d="M0 1h16v13H6l-3 3v-3H0z" fill="#fff" />
                    <path d="M3 4.5h10M3 7.5h10M3 10.5h6" stroke="#1c1c1c" />
                    <circle cx="16" cy="17" r="8.5" fill="#333" stroke="#888" />
                    <text x="9" y="21" fontSize="11" fontWeight="700" fill="#fff">31</text>
                </Svg>
            </IconButton>
            <Divider $h={40} $m="0" $color="#555" />
        </Tray>
    </Taskbar>
);

const App = () => (
    <Page>
        <GlobalStyle />
        <TitleSection />
        <TabBar>
            {tabs.map(name => (
                <Tab key={name} $active={name === 'Home'}><span>{name}</span></Tab>
            ))}
            <ShareButton>
                <ShareIcon />
                Share
                <Chevron color="#fff" />
            </ShareButton>
        </TabBar>
        <RibbonSection />
        <FormulaSection />
        <Worksheet />
        <SheetFooter />
        <TaskbarSection />
        <Tracker>
            <OpenApp>Open App ↗</OpenApp>
            <TrackerLine $color="rgba(129, 206, 215, 0.95)">Working Status: Active</TrackerLine>
            <TrackerLine $color="rgba(93, 222, 148, 0.95)">Active: 05:56:27</TrackerLine>
            <TrackerLine $color="rgba(250, 116, 106, 0.95)">In Active: 01:15:34</TrackerLine>
        </Tracker>
    </Page>
);

export default App;
